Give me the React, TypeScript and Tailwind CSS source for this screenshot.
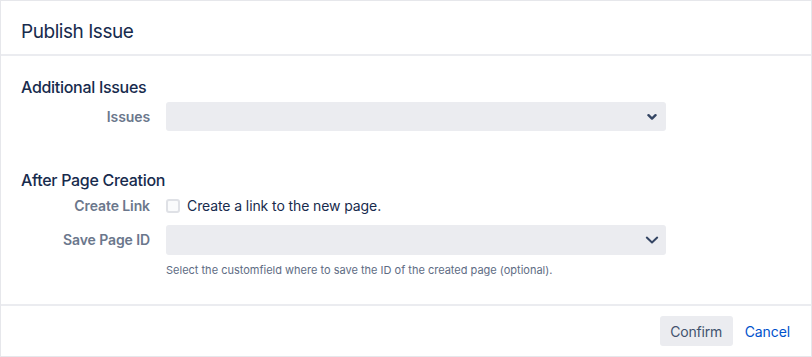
import React from "react";

function SmallChevron() {
  return (
    <svg width="10" height="8" viewBox="0 0 10 8" className="text-[#344563]">
      <path d="M1.5 2.2 L5 5.6 L8.5 2.2" fill="none" stroke="currentColor" strokeWidth="2.4" strokeLinecap="round" strokeLinejoin="round" />
    </svg>
  );
}

function BigChevron() {
  return (
    <svg width="14" height="10" viewBox="0 0 14 10" className="text-[#344563]">
      <path d="M1.8 2.6 L7 7.4 L12.2 2.6" fill="none" stroke="currentColor" strokeWidth="2" strokeLinecap="round" strokeLinejoin="round" />
    </svg>
  );
}

function Row({ label, children }: { label: string; children: React.ReactNode }) {
  return (
    <div className="flex items-center">
      <div className="w-[129px] shrink-0 text-right text-[14px] font-semibold leading-5 tracking-[-0.1px] text-[#6b778c]">{label}</div>
      <div className="ml-[16px] flex-1">{children}</div>
    </div>
  );
}

export default function App() {
  return (
    <div
      className="flex h-[357px] w-[812px] flex-col border border-[#e6e7eb] bg-white text-[#172b4d]"
      style={{ fontFamily: "Inter, 'Noto Sans', sans-serif" }}
    >
      {/* header */}
      <div className="h-[55px] shrink-0 border-b-2 border-[#ebecf0] px-[20px] pt-[19px]">
        <h1 className="text-[19px] leading-6 font-normal tracking-[-0.45px]">Publish Issue</h1>
      </div>

      {/* body */}
      <div className="flex-1 px-[20px] pt-[21px]">
        <h2 className="text-[16px] leading-5 font-medium tracking-[-0.3px]">Additional Issues</h2>
        <div className="mt-[5px]">
          <Row label="Issues">
            <div className="flex h-[29px] w-[500px] items-center justify-end rounded-[3px] bg-[#ebecf0] pr-[9px]">
              <SmallChevron />
            </div>
          </Row>
        </div>

        <h2 className="mt-[39px] text-[16px] leading-5 font-medium tracking-[-0.3px]">After Page Creation</h2>
        <div className="mt-[6px]">
          <Row label="Create Link">
            <label className="flex items-center gap-[7px] text-[14px] leading-5 tracking-[-0.1px] text-[#172b4d]">
              <span className="block h-[14px] w-[14px] rounded-[3px] border-2 border-[#dfe1e6] bg-[#fafbfc]" />
              Create a link to the new page.
            </label>
          </Row>
        </div>
        <div className="mt-[9px]">
          <Row label="Save Page ID">
            <div className="flex h-[30px] w-[500px] items-center justify-end rounded-[3px] bg-[#ebecf0] pr-[7px]">
              <BigChevron />
            </div>
          </Row>
        </div>
        <p className="ml-[145px] mt-[8px] text-[11px] leading-[14px] text-[#5e6c84]">
          Select the customfield where to save the ID of the created page (optional).
        </p>
      </div>

      {/* footer */}
      <div className="flex h-[52px] shrink-0 items-center justify-end border-t-2 border-[#ebecf0] pr-[21px]">
        <button className="h-[30px] w-[73px] rounded-[3px] bg-[#ebecf0] text-[14px] tracking-[-0.2px] text-[#42526e]">Confirm</button>
        <button className="ml-[12px] text-[14px] tracking-[-0.1px] text-[#0052cc]">Cancel</button>
      </div>
    </div>
  );
}
